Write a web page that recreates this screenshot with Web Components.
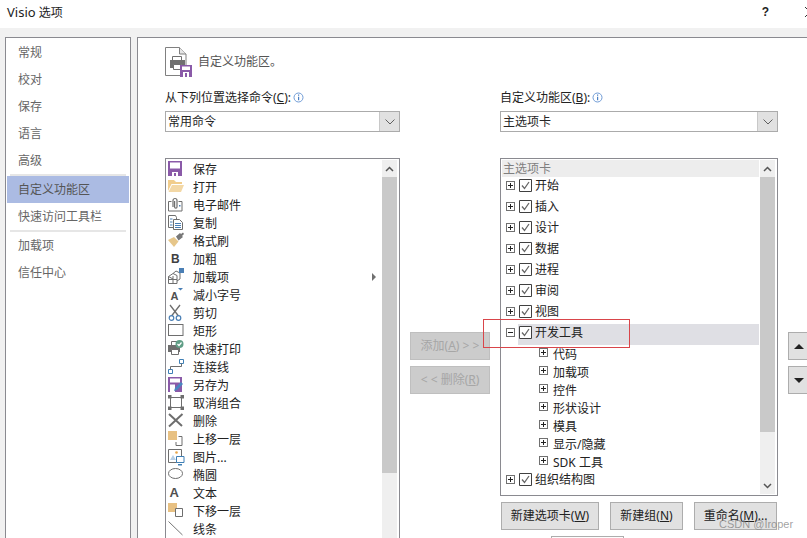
<!DOCTYPE html>
<html>
<head>
<meta charset="utf-8">
<title>Visio 选项</title>
<style>
  html, body { margin: 0; height: 100%; overflow: hidden; background: #f1f1f1; }
  body { font: 12px/18px "Noto Sans", "Noto Sans CJK SC", sans-serif; color: #262626; }
</style>
</head>
<body>
<options-dialog>
  <nav-list slot="nav">
    <nav-item>常规</nav-item>
    <nav-item>校对</nav-item>
    <nav-item>保存</nav-item>
    <nav-item>语言</nav-item>
    <nav-item>高级</nav-item>
    <nav-sep></nav-sep>
    <nav-item selected>自定义功能区</nav-item>
    <nav-item>快速访问工具栏</nav-item>
    <nav-sep></nav-sep>
    <nav-item>加载项</nav-item>
    <nav-item>信任中心</nav-item>
  </nav-list>

  <ribbon-page slot="page">
    <form-label slot="left-label">从下列位置选择命令(<u>C</u>):</form-label>
    <form-combo slot="left-combo">常用命令</form-combo>
    <list-box slot="left-list" thumb="296">
      <cmd-row icon="save">保存</cmd-row>
      <cmd-row icon="open">打开</cmd-row>
      <cmd-row icon="mail">电子邮件</cmd-row>
      <cmd-row icon="copy">复制</cmd-row>
      <cmd-row icon="brush">格式刷</cmd-row>
      <cmd-row icon="bold">加粗</cmd-row>
      <cmd-row icon="addin" more>加载项</cmd-row>
      <cmd-row icon="shrink">减小字号</cmd-row>
      <cmd-row icon="cut">剪切</cmd-row>
      <cmd-row icon="rect">矩形</cmd-row>
      <cmd-row icon="print">快速打印</cmd-row>
      <cmd-row icon="conn">连接线</cmd-row>
      <cmd-row icon="saveas">另存为</cmd-row>
      <cmd-row icon="ungroup">取消组合</cmd-row>
      <cmd-row icon="del">删除</cmd-row>
      <cmd-row icon="front">上移一层</cmd-row>
      <cmd-row icon="pic">图片...</cmd-row>
      <cmd-row icon="oval">椭圆</cmd-row>
      <cmd-row icon="text">文本</cmd-row>
      <cmd-row icon="back">下移一层</cmd-row>
      <cmd-row icon="line">线条</cmd-row>
    </list-box>

    <push-button slot="mid" disabled>添加(<u>A</u>) &gt; &gt;</push-button>
    <push-button slot="mid" disabled>&lt; &lt; 删除(<u>R</u>)</push-button>

    <form-label slot="right-label">自定义功能区(<u>B</u>):</form-label>
    <form-combo slot="right-combo">主选项卡</form-combo>
    <list-box slot="right-list" thumb="255" arrows>
      <tree-head>主选项卡</tree-head>
      <tree-row>开始</tree-row>
      <tree-row>插入</tree-row>
      <tree-row>设计</tree-row>
      <tree-row>数据</tree-row>
      <tree-row>进程</tree-row>
      <tree-row>审阅</tree-row>
      <tree-row>视图</tree-row>
      <tree-row open selected>开发工具</tree-row>
      <tree-row sub>代码</tree-row>
      <tree-row sub>加载项</tree-row>
      <tree-row sub>控件</tree-row>
      <tree-row sub>形状设计</tree-row>
      <tree-row sub>模具</tree-row>
      <tree-row sub>显示/隐藏</tree-row>
      <tree-row sub>SDK 工具</tree-row>
      <tree-row>组织结构图</tree-row>
      <tree-row></tree-row>
    </list-box>

    <push-button slot="actions" style="width:98px">新建选项卡(<u>W</u>)</push-button>
    <push-button slot="actions" style="width:73px">新建组(<u>N</u>)</push-button>
    <push-button slot="actions" style="width:83px">重命名(<u>M</u>)...</push-button>

    <push-button slot="updown" icon="up"></push-button>
    <push-button slot="updown" icon="down"></push-button>
  </ribbon-page>
</options-dialog>

<script>
const ICONS = {
  save: '<path fill="#8a5aa8" d="M1 1h14v15H1z"/><path fill="#fff" d="M3 2.500h10v6H3zM5 12h6v4H5z"/><path fill="#8a5aa8" d="M7 13h2v3H7z"/>',
  open: '<path fill="#f1cd8c" d="M1 2h6l2 2h6v2H4.500L1 13z"/><path fill="#f3d8a6" d="M1.500 14 5 7h12l-3 7z"/>',
  mail: '<path fill="none" stroke="#6e6e6e" d="M1.500 5.500h3M11.500 5.500h3.500v9.500H1.500V5.500"/><path fill="none" stroke="#6e6e6e" stroke-width="1.200" d="M6 11V4.500a2 2 0 0 1 4 0V11a1.200 1.200 0 0 1-2.400 0V5"/><path fill="#4a7fb5" d="M12 9h1.500v1.500H12z"/>',
  copy: '<path fill="#fff" stroke="#6e6e6e" d="M1.500 1.500h7l1 2v10h-8z"/><path fill="#fff" stroke="#6e6e6e" d="M6.500 5.500h6l3 3v7h-9z"/><path stroke="#4a7fb5" d="M3 5h2.500M3 8h2.500M3 11h2.500M8 9.500h6M8 11.500h6M8 13.500h6"/>',
  brush: '<path fill="#e6c68a" d="M1 8l6-3 4.500 4.500L7 15z"/><path fill="#777" d="M9 4.500 13 1l1 1 2-1.500 1 1.500-2 2 1 1-4.500 3.500z"/>',
  bold: '<text x="4" y="12.500" font-family="Liberation Sans" font-weight="700" font-size="12" fill="#404040">B</text>',
  addin: '<path fill="none" stroke="#6e6e6e" d="M1.500 8.500 6 5.500l4 2v8H1.500zM1.500 11.500H10M6 8v7.500M1.500 8.500 6 11M6 5.500 9 3l4 2v6l-3 2"/><path fill="#4a7fb5" d="M12 0h5v5h-5z"/>',
  shrink: '<text x="3.500" y="14" font-family="Liberation Sans" font-weight="700" font-size="11" fill="#505050">A</text><path fill="#4a7fb5" d="M11 2h5l-2.500 2.500z"/>',
  cut: '<path fill="none" stroke="#6e6e6e" stroke-width="1.300" d="M3 1l8.500 11M13 1 4.500 12"/><circle cx="4.500" cy="14" r="2.300" fill="none" stroke="#4a7fb5" stroke-width="1.200"/><circle cx="11.500" cy="14" r="2.300" fill="none" stroke="#4a7fb5" stroke-width="1.200"/>',
  rect: '<rect x="1.500" y="2.500" width="14.500" height="11" fill="#fff" stroke="#6e6e6e"/>',
  print: '<path fill="#fff" stroke="#6e6e6e" d="M4.500 1.500h6v4h-6z"/><path fill="#6e6e6e" d="M1 5h12v7H1z"/><path fill="#fff" stroke="#6e6e6e" d="M4.500 9.500h7v5h-7z"/><circle cx="12.500" cy="4" r="4" fill="#5f9e86"/><path fill="none" stroke="#fff" stroke-width="1.200" d="M10.500 4l1.500 1.500 2.500-3"/>',
  conn: '<path fill="#fff" stroke="#3f7fb5" d="M12.500 1.500h4v4h-4zM1.500 11.500h4v4h-4z"/><path fill="none" stroke="#6e6e6e" d="M3.500 11.500V8.500h11v-3"/>',
  saveas: '<path fill="#8a5aa8" d="M1 1h14v15H1z"/><path fill="#fff" d="M3 2.500h10v4H3zM3 8.500h5v7.500H3z"/><path fill="#fff" d="M5 12h3v4H5z"/><path fill="#4a86c0" d="M7 15l1-3 6-6 2 2-6 6z"/>',
  ungroup: '<path fill="none" stroke="#6e6e6e" d="M3.500 3.500h11v10h-11z"/><path fill="#6e6e6e" d="M1 1h3.500v3.500H1zM13.500 1H17v3.500h-3.500zM1 12.500h3.500V16H1zM13.500 12.500H17V16h-3.500z"/>',
  del: '<path fill="none" stroke="#6e6e6e" stroke-width="2" d="M2 2l13 12M15.500 2 2 14.500"/>',
  front: '<path fill="#e8c183" d="M1 1h9v9H1z"/><path fill="none" stroke="#6e6e6e" d="M11.500 6.500h3.500v9h-6V12"/>',
  pic: '<path fill="#fff" stroke="#6e6e6e" d="M1.500 1.500h13v13h-13z"/><path fill="#b7cfe6" d="M3 12l3-5 3 5z"/><circle cx="9.500" cy="4.500" r="1.300" fill="#e8a64a"/><path fill="#fff" stroke="#3f7fb5" d="M9.500 8.500h7.500v6h-7.500z"/><path fill="#3f7fb5" d="M11 16h4v1.500h-4z"/>',
  oval: '<ellipse cx="8.500" cy="7.500" rx="7" ry="5" fill="#fff" stroke="#6e6e6e"/>',
  text: '<text x="2.500" y="13" font-family="Liberation Sans" font-weight="700" font-size="13" fill="#505050">A</text>',
  back: '<path fill="#e8c183" d="M1 1h9v9H1z"/><path fill="#fff" stroke="#6e6e6e" d="M8.500 6.500h7v8h-7z"/>',
  line: '<path fill="none" stroke="#777" d="M1.500 1.500 15.500 15"/>'
};

class DialogPart extends HTMLElement {
  constructor(html) {
    super();
    this.attachShadow({mode: 'open'});
    this.shadowRoot.innerHTML = html;
  }
}

customElements.define('options-dialog', class extends DialogPart {
  constructor() {
    super(`
<style>
  :host { display: grid; grid-template-columns: 131px 1fr; grid-template-rows: 28px 1fr; column-gap: 6px; height: 538px; overflow: hidden; }
  .title { grid-column: 1 / 3; background: #fff; display: flex; align-items: center; justify-content: space-between; padding: 0 0 4px 7px; font-size: 12px; color: #222; overflow: hidden; }
  .title b { font-weight: 400; font-size: 13px; }
  .btns { display: flex; align-items: center; gap: 36px; font: 12px "Liberation Sans", sans-serif; }
  .help { font-weight: 700; }
  .btns svg { display: block; }
  .nav { margin: 9px 0 0 5px; min-width: 0; }
  .page { margin-top: 9px; min-width: 0; }
</style>
<div class="title"><span><b>Visio</b> 选项</span><span class="btns"><span class="help">?</span><svg width="2" height="10" viewBox="0 0 2 10"><path fill="none" stroke="#333" d="M0 0 2 2M0 10l2-2"/></svg></span></div>
<div class="nav"><slot name="nav"></slot></div>
<div class="page"><slot name="page"></slot></div>
`);
  }
});

customElements.define('nav-list', class extends DialogPart {
  constructor() {
    super(`
<style>
  :host { display: flex; flex-direction: column; box-sizing: border-box; height: 520px; background: #fff; border: 1px solid #8a8a90; padding: 1px 1px 0; color: #666; }
</style>
<slot></slot>
`);
  }
});

customElements.define('nav-item', class extends DialogPart {
  constructor() {
    super(`
<style>
  :host { display: block; height: 27px; line-height: 27px; padding-left: 11px; }
  :host([selected]) { background: #abbbe3; color: #555; }
</style>
<slot></slot>
`);
  }
});

customElements.define('nav-sep', class extends DialogPart {
  constructor() {
    super(`
<style>
  :host { display: block; height: 2px; margin: 0 3px; background: #e6e6e6; }
</style>
`);
  }
});

customElements.define('ribbon-page', class extends DialogPart {
  constructor() {
    super(`
<style>
  :host { display: block; box-sizing: border-box; height: 510px; background: #fff; border: solid #8a8a90; border-width: 1px 0 0 1px; padding-left: 27px; overflow: hidden; position: relative; }
  .head { display: flex; align-items: center; gap: 6px; height: 30px; margin-top: 9px; color: #555; }
  .grid { display: grid; grid-template-columns: 235px 100px 278px 29px; grid-template-rows: 22px 21px 26px auto; margin-top: 12px; }
  .label { display: flex; align-items: flex-start; gap: 2px; }
  .label info-mark { margin-top: 3px; }
  .list { grid-row: 4; }
  .mid { grid-column: 2; grid-row: 4; display: flex; flex-direction: column; gap: 6px; padding: 174px 10px 0; }
  .updown { grid-column: 4; grid-row: 4; display: flex; flex-direction: column; gap: 6px; padding: 174px 0 0 10px; margin-right: -3px; }
  .actions { display: flex; gap: 11px; margin: 6px 0 0 1px; }
  .next { margin: 6px 0 0 51px; width: 73px; height: 28px; box-sizing: border-box; border: 1px solid #adadad; background: #fdfdfd; }
  svg { display: block; }
  .flag { position: absolute; left: 345px; top: 281px; width: 147px; height: 29px; box-sizing: border-box; border: 1px solid #d9454a; }
  .mark { position: absolute; left: 581px; top: 480px; font: 11px "Liberation Sans", sans-serif; color: rgba(120,120,120,.7); }
</style>
<div class="head">
  <svg width="27" height="30" viewBox="0 0 27 30">
    <path fill="#fff" stroke="#808080" d="M.5.5h14l6.500 6.500v21.500H.5z"/><path fill="#e6e6e6" stroke="#808080" d="M14.500.5V7H21"/>
    <path fill="#fff" stroke="#707070" d="M7.500 9.500h9v5h-9z"/><path fill="#707070" d="M5 13h15v8H5z"/><path fill="#fff" stroke="#707070" d="M8.500 17.500h8v5h-8z"/>
    <path fill="#8a5aa8" d="M15 18h12v12H15z"/><path fill="#fff" d="M17 19.500h8v3.500h-8zM18 25h6v5h-6z"/><path fill="#8a5aa8" d="M20 26h2v4h-2z"/>
  </svg>
  <span>自定义功能区。</span>
</div>
<div class="grid">
  <div class="label"><slot name="left-label"></slot><info-mark></info-mark></div>
  <div></div>
  <div class="label"><slot name="right-label"></slot><info-mark></info-mark></div>
  <div></div>
  <div style="grid-row:2"><slot name="left-combo"></slot></div>
  <div style="grid-row:2;grid-column:3"><slot name="right-combo"></slot></div>
  <div class="list" style="grid-column:1"><slot name="left-list"></slot></div>
  <div class="mid"><slot name="mid"></slot></div>
  <div class="list" style="grid-column:3">
    <slot name="right-list"></slot>
    <div class="actions"><slot name="actions"></slot></div>
    <div class="next"></div>
  </div>
  <div class="updown"><slot name="updown"></slot></div>
</div>
<div class="flag"></div>
<div class="mark">CSDN @Iroper</div>
`);
  }
});

customElements.define('info-mark', class extends DialogPart {
  constructor() {
    super(`
<style>
  :host { display: block; width: 11px; height: 11px; }
  svg { display: block; }
</style>
<svg width="11" height="11" viewBox="0 0 11 11"><circle cx="5.500" cy="5.500" r="4.500" fill="#fff" stroke="#6f9bd6"/><path fill="#4a7fc4" d="M5 2.500h1.200v1.200H5zM5 4.800h1.200v3.500H5z"/></svg>
`);
  }
});

customElements.define('form-label', class extends DialogPart {
  constructor() {
    super(`
<style>
  :host { display: block; white-space: nowrap; color: #222; }
</style>
<slot></slot>
`);
  }
});

customElements.define('form-combo', class extends DialogPart {
  constructor() {
    super(`
<style>
  :host { display: flex; box-sizing: border-box; height: 21px; background: #fff; border: 1px solid #ababab; line-height: 19px; padding-left: 2px; justify-content: space-between; }
  .btn { width: 19px; background: #e1e1e1; border-left: 1px solid #c8c8c8; display: flex; align-items: center; justify-content: center; }
</style>
<span><slot></slot></span>
<span class="btn"><svg width="10" height="6" viewBox="0 0 10 6"><path fill="none" stroke="#606060" d="M.5.500 5 5 9.500.5"/></svg></span>
`);
  }
});

customElements.define('list-box', class extends DialogPart {
  constructor() {
    super(`
<style>
  :host { display: flex; box-sizing: border-box; height: 338px; background: #fff; border: 1px solid #8a8a90; padding: 1px 2px 1px 1px; overflow: hidden; }
  :host([thumb="296"]) { height: 400px; }
  .rows { flex: 1; min-width: 0; overflow: hidden; }
  .bar { width: 15px; margin-left: 1px; background: #efefef; display: flex; flex-direction: column; }
  .arrow { height: 17px; display: flex; align-items: center; justify-content: center; flex: none; }
  .thumb { background: #c9c9c9; flex: none; }
  .end { margin-top: auto; }
  svg { display: block; }
</style>
<div class="rows"><slot></slot></div>
<div class="bar">
  <div class="arrow"><svg width="9" height="6" viewBox="0 0 9 6"><path fill="none" stroke="#555" stroke-width="1.500" d="M1 5 4.500 1.500 8 5"/></svg></div>
  <div class="thumb"></div>
  <div class="arrow end"><svg width="9" height="6" viewBox="0 0 9 6"><path fill="none" stroke="#555" stroke-width="1.500" d="M1 1 4.500 4.500 8 1"/></svg></div>
</div>
`);
    this.shadowRoot.querySelector('.thumb').style.height = this.getAttribute('thumb') + 'px';
    if (!this.hasAttribute('arrows')) {
      this.shadowRoot.querySelector('.end').remove();
    }
  }
});

customElements.define('cmd-row', class extends DialogPart {
  constructor() {
    super(`
<style>
  :host { display: flex; height: 18px; position: relative; white-space: nowrap; color: #222; }
  svg { flex: none; margin-right: 8px; display: block; }
  .txt { padding-top: 1px; }
  .more { position: absolute; right: 5px; top: 5px; width: 0; height: 0; border: solid transparent; border-width: 4px 0 4px 4px; border-left-color: #707070; }
</style>
<svg width="18" height="18" viewBox="0 0 18 18"></svg><span class="txt"><slot></slot></span>
`);
    this.shadowRoot.querySelector('svg').innerHTML = ICONS[this.getAttribute('icon')] || '';
    if (this.hasAttribute('more')) {
      const more = document.createElement('span');
      more.className = 'more';
      this.shadowRoot.append(more);
    }
  }
});

customElements.define('tree-head', class extends DialogPart {
  constructor() {
    super(`
<style>
  :host { display: block; height: 17px; line-height: 17px; background: #ededed; color: #7f7f7f; padding-left: 1px; }
</style>
<slot></slot>
`);
  }
});

customElements.define('tree-row', class extends DialogPart {
  constructor() {
    super(`
<style>
  :host { display: flex; align-items: flex-start; height: 21px; white-space: nowrap; padding-left: 4px; color: #222; }
  :host([sub]) { height: 18px; padding-left: 37px; }
  .tog { box-sizing: border-box; width: 9px; height: 9px; border: 1px solid #707070; flex: none; margin: 4px 3px 0 0; }
  :host([sub]) .tog { margin: 3px 5px 0 0; }
  svg { display: block; }
  .box { flex: none; margin: 0 3px 0 1px; }
  .body { display: flex; align-items: center; flex: 1; height: 21px; box-sizing: border-box; padding-bottom: 4px; }
  :host([selected]) .body { background: #dfdfe4; }
  :host([sub]) .body { height: 18px; padding: 2px 0 0; }
  :host([sub]) .box { display: none; }
</style>
<div class="tog"><svg width="7" height="7" viewBox="0 0 7 7"><path class="sign" stroke="#222" d=""/></svg></div>
<div class="body">
  <svg class="box" width="13" height="13" viewBox="0 0 13 13"><path fill="#fff" stroke="#404040" d="M.5.500h12v12H.5z"/><path fill="none" stroke="#666" stroke-width="1.300" d="M3 6.500 5.500 9.500 10 3"/></svg>
  <slot></slot>
</div>
`);
    this.shadowRoot.querySelector('.sign').setAttribute('d', this.hasAttribute('open') ? 'M1 3.500h5' : 'M1 3.500h5M3.500 1v5');
  }
});

customElements.define('push-button', class extends DialogPart {
  constructor() {
    super(`
<style>
  :host { display: flex; align-items: center; justify-content: center; box-sizing: border-box; height: 28px; background: #e1e1e1; border: 1px solid #adadad; white-space: nowrap; color: #222; }
  :host([disabled]) { background: #ccc; border-color: #bfbfbf; color: #a6a6a6; }
  .tri { width: 0; height: 0; border: solid transparent; border-width: 0 5px 5px; border-bottom-color: #222; }
  :host([icon="down"]) .tri { border-width: 5px 5px 0; border-top-color: #222; border-bottom-color: transparent; }
</style>
<slot></slot>
`);
    if (this.hasAttribute('icon')) {
      const tri = document.createElement('span');
      tri.className = 'tri';
      this.shadowRoot.append(tri);
    }
  }
});
</script>
</body>
</html>
